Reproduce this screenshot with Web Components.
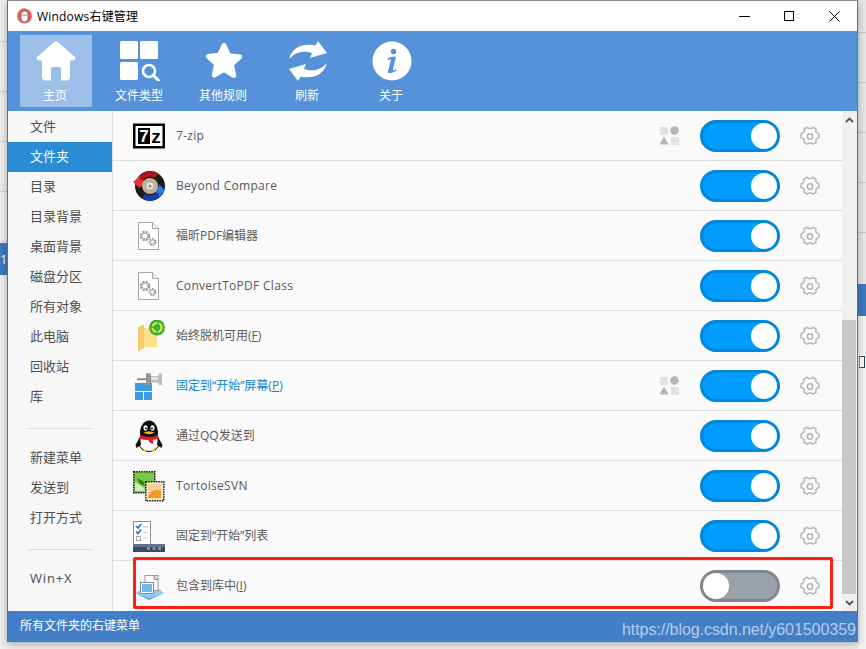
<!DOCTYPE html>
<html>
<head>
<meta charset="utf-8">
<title>Windows右键管理</title>
<style>
  html, body { margin: 0; padding: 0; }
  body { width: 866px; height: 649px; overflow: hidden; }
</style>
</head>
<body>
<desk-top>
  <app-window></app-window>
</desk-top>

<script>
const FONT = `"Open Sans", "Noto Sans CJK SC", sans-serif`;

const ARROW = `M1 18C3 10 10 4 18 4c3-.5 7-.5 9.500.5L30 0l9 12-17 5 2-5C16 9 7 11 1 18z`;

// icons for the toolbar, all white on blue
const TOOL_ICONS = {
  home: `<svg width="40" height="40" viewBox="0 0 40 40"><path fill="#fff" d="M20 .6c1 0 1.800.4 2.600 1.100L38.600 15.700c1.800 1.700.7 3.900-1.300 3.900H34V36c0 2-1.300 3.400-3.300 3.400H25V27.800c0-1.200-.7-1.900-1.800-1.900h-6.400c-1.100 0-1.800.7-1.800 1.900V39.400H9.300C7.300 39.400 6 38 6 36V19.600H2.700c-2 0-3.100-2.200-1.300-3.900L17.400 1.700C18.200 1 19 .6 20 .6z"/></svg>`,
  types: `<svg width="40" height="40" viewBox="0 0 40 40"><g fill="#fff"><rect x="0" y="0" width="18" height="18" rx="1.500"/><rect x="20" y="0" width="18" height="18" rx="1.500"/><rect x="0" y="21" width="18" height="18" rx="1.500"/></g><circle cx="29" cy="30" r="6" fill="none" stroke="#fff" stroke-width="2.600"/><path d="M33.500 34.500L39 40" stroke="#fff" stroke-width="3" stroke-linecap="round"/></svg>`,
  star: `<svg width="40" height="40" viewBox="0 0 40 40"><path fill="#fff" stroke="#fff" stroke-width="5" stroke-linejoin="round" d="M20 4.500l4.600 10.300 11 1.200-8.200 7.500 2.300 11L20 28.400 10.300 34l2.300-11-8.200-7.500 11-1.200z"/></svg>`,
  refresh: `<svg width="40" height="40" viewBox="0 0 40 40"><g fill="#fff"><path d="${ARROW}"/><path d="${ARROW}" transform="rotate(180 20 20)"/></g></svg>`,
  info: `<svg width="40" height="40" viewBox="0 0 40 40"><circle cx="20" cy="20" r="19.500" fill="#fff"/><g fill="#5592d9"><circle cx="21.500" cy="10.500" r="2.700"/><path d="M15.500 17.500c2-1.300 4.500-2.100 7.200-2.100.9 0 1.200.6 1 1.500l-2.800 11.600c-.2.800.4 1 1 .7l2-.9.500 1.200c-2 1.500-4.400 2.600-7 2.600-1.200 0-1.700-.7-1.400-1.900l2.800-11c.2-.8-.3-1-1-.7l-1.900.8z"/></g></svg>`
};

// icons at the left of the rows, 32x32
const ROW_ICONS = {
  sevenzip: `<svg width="32" height="32" viewBox="0 0 32 32"><rect x="0" y="3.500" width="32" height="25" fill="#000"/><rect x="2.500" y="6" width="27" height="20" fill="#fff"/><rect x="5" y="8" width="12" height="16" fill="#000"/><text x="11" y="22" text-anchor="middle" font-family="Liberation Sans" font-weight="700" font-size="17" fill="#fff">7</text><text x="23" y="23" text-anchor="middle" font-family="Liberation Sans" font-weight="700" font-size="19" fill="#000">z</text></svg>`,
  beyond: `<svg width="32" height="32" viewBox="0 0 32 32"><circle cx="17" cy="16" r="15" fill="#1a1a1a"/><path d="M3 13C5 5 12 1 17 1c3 0 6 1 8 3l-3 4c-4-2-9-2-12 2v3z" fill="#b3121a"/><path d="M0 12l7-6v4l4 .5v5.500l-4 .5v2z" fill="#e8343a"/><path d="M31 19c-2 8-9 12-14 12-3 0-6-1-8-3l3-4c4 2 9 2 12-2v-3z" fill="#1240a8"/><path d="M32 20l-6 7v-4l-4-.5V17h4v-3z" fill="#2f78e8"/><circle cx="17" cy="16" r="8" fill="#bdb29c"/><circle cx="17" cy="16" r="3.500" fill="#e8e4da"/><circle cx="17" cy="16" r="1.500" fill="#8f8a80"/></svg>`,
  doc: `<svg width="32" height="32" viewBox="0 0 32 32"><path d="M5.500 2.500h14l6 6v21h-20z" fill="#fff" stroke="#a5a5a5"/><path d="M19.500 2.500v6h6" fill="#eee" stroke="#a5a5a5"/><g fill="none" stroke="#9a9a9a"><circle cx="12" cy="16" r="3.800" stroke-width="3" stroke-dasharray="2 1"/><circle cx="19.500" cy="22" r="2.700" stroke-width="2.600" stroke-dasharray="1.600 .8"/></g></svg>`,
  offline: `<svg width="32" height="32" viewBox="0 0 32 32"><path d="M10 8h14v19H10z" fill="#fcdf8c"/><path d="M5 7l6-2.500V28l-6 3.500z" fill="#f2cd6a"/><circle cx="24" cy="7.500" r="8" fill="#41ad3a"/><circle cx="24" cy="7.500" r="4.500" fill="none" stroke="#d9e83f" stroke-width="2" stroke-dasharray="6 1.500"/></svg>`,
  pin: `<svg width="32" height="32" viewBox="0 0 32 32"><g fill="#3a9be9"><rect x="2" y="13" width="17" height="8"/><rect x="2" y="22" width="8" height="8"/><rect x="11" y="22" width="8" height="8"/></g><rect x="4" y="8.500" width="10" height="1.500" fill="#777"/><path d="M13 3.500h5v2.500h7l1-2.500h3V15h-3l-1-2.500h-7V15h-5z" fill="#bcbcbc"/><rect x="13" y="3.500" width="5" height="11.500" fill="#969696"/><rect x="18" y="7" width="7" height="3" fill="#e2e2e2"/></svg>`,
  qq: `<svg width="32" height="32" viewBox="0 0 32 32"><ellipse cx="16" cy="23" rx="10" ry="8.500" fill="#fff" stroke="#111"/><path d="M7 13C7 6 11 .5 16 .5S25 6 25 13c0 2-.5 3-1 4H8c-.5-1-1-2-1-4z" fill="#111"/><path d="M7 17l-4.500 8 1 3 4.500-3zM25 17l4.500 8-1 3-4.500-3z" fill="#111"/><ellipse cx="12.500" cy="8" rx="2" ry="2.800" fill="#fff"/><ellipse cx="19.500" cy="8" rx="2" ry="2.800" fill="#fff"/><circle cx="13" cy="8.500" r="1" fill="#111"/><circle cx="19" cy="8.500" r="1" fill="#111"/><path d="M10.500 12.500q5.500-2 11 0-5.500 3.500-11 0z" fill="#f7b21d"/><path d="M7 15q9 4 18 0l.8 3.500-6 1.500.5 4-4-1.800-1-2.200Q10 20 6.500 18.500z" fill="#e01b22"/><path d="M8 31q3-3 6 0zM18 31q3-3 6 0z" fill="#f7b21d"/></svg>`,
  svn: `<svg width="32" height="32" viewBox="0 0 32 32"><rect x=".8" y="1.800" width="21" height="21" fill="#7cc84a" stroke="#111" stroke-width="1.500" stroke-dasharray="1.500 1"/><path d="M2 12l8 5 3 4H2z" fill="#d3edbd"/><path d="M4 8l6 3 2 5-5-2z" fill="#2f7d22"/><rect x="12.800" y="11.800" width="18" height="19" fill="#fdf2de" stroke="#111" stroke-width="1.500" stroke-dasharray="1.500 1"/><rect x="14.500" y="13.500" width="14" height="15" fill="#f9cf97"/><path d="M15 27q5-10 13-6v7H15z" fill="#ef9a22"/></svg>`,
  list: `<svg width="32" height="32" viewBox="0 0 32 32"><rect x=".5" y="1.500" width="17" height="24" fill="#fff" stroke="#8a8a8a"/><path d="M3 6l2 2 3-4M3 11.500l2 2 3-4" fill="none" stroke="#1f6fc9" stroke-width="1.600"/><path d="M10 7h5M10 12.500h5M10 18h5" stroke="#c4c4c4"/><rect x="3.500" y="16.500" width="4" height="4" fill="none" stroke="#aaa"/><rect x="0" y="24" width="32" height="9" fill="#3b4a63"/><rect x="0" y="24" width="32" height="3" fill="#65748d"/><g fill="#8793a8"><rect x="14" y="27" width="3" height="3"/><rect x="19.500" y="27" width="3" height="3"/><rect x="25" y="27" width="3" height="3"/></g></svg>`,
  library: `<svg width="32" height="32" viewBox="0 0 32 32"><path d="M2 23l7-4h17l5 4-15 5z" fill="#8ecdf4"/><path d="M2 23l14 5 15-5-15 7z" fill="#45a5e6"/><rect x="12" y="5.500" width="13" height="15" fill="#fff" stroke="#999"/><path d="M21 5.500l4 4h-4z" fill="#ddd" stroke="#999"/><rect x="7.500" y="12.500" width="13" height="11" fill="#fff" stroke="#888"/><rect x="9" y="14" width="10" height="8" fill="#6cb9ef"/></svg>`
};

const GEAR = `<svg width="20" height="21" viewBox="1.500 .5 17 18"><path fill="none" stroke="#b3b3b3" stroke-width="1.200" stroke-linejoin="round" d="M7.600 1.500c.8.900 1.500 1.300 2.400 1.300s1.600-.4 2.400-1.300l2.800 1.600c-.4 1.200-.3 2 .1 2.700.5.800 1.200 1.200 2.400 1.400v3.200c-1.200.2-1.900.6-2.400 1.400-.4.700-.5 1.500-.1 2.700l-2.800 1.600c-.8-.9-1.500-1.300-2.400-1.300s-1.600.4-2.400 1.300l-2.800-1.600c.4-1.200.3-2-.1-2.700-.5-.8-1.200-1.200-2.400-1.400V7.200c1.200-.2 1.900-.6 2.400-1.400.4-.7.500-1.500.1-2.700z"/><circle cx="10" cy="9.500" r="2.300" fill="none" stroke="#b3b3b3" stroke-width="1.200"/></svg>`;

const SHAPES = `<svg width="19" height="19" viewBox="0 0 19 19"><g fill="#e2e2e2"><rect x="0" y="1" width="8" height="8" rx="1"/><rect x="11" y="11" width="8" height="8" rx="1"/></g><g fill="#b5b5b5"><circle cx="14.500" cy="4.500" r="4.300"/><path d="M4 10.500l4.500 8h-9z"/></g></svg>`;

class DeskTop extends HTMLElement {
  constructor() {
    super();
    this.attachShadow({ mode: 'open' });
    this.shadowRoot.innerHTML = `
      <style>
        :host {
          display: block;
          position: relative;
          width: 866px;
          height: 649px;
          overflow: hidden;
          background: repeating-linear-gradient(#eeeeee 0, #eeeeee 49px, #d4d4d4 49px, #d4d4d4 50px) 0 -8px;
          font-family: ${FONT};
        }
        .patch { position: absolute; background: #3f79bd; width: 10px; height: 32px; }
        .left { left: 0; top: 243px; color: #fff; font-size: 13px; line-height: 32px; }
        .right { right: 0; top: 284px; }
        .strip {
          position: absolute;
          left: 858px;
          right: 0;
          top: 0;
          height: 284px;
          background: repeating-linear-gradient(#e6e6e6 0, #e6e6e6 49px, #c8c8c8 49px, #c8c8c8 50px) 0 -17px;
        }
        .floor { position: absolute; right: 0; left: 858px; top: 315px; bottom: 0; background: #f3f3f3; }
        .left-floor { position: absolute; left: 0; width: 8px; top: 275px; bottom: 0; background: #efefef; }
        .tick {
          position: absolute;
          left: 859px;
          top: 356px;
          width: 4px;
          height: 10px;
          border: 1px solid #2c4a6e;
          border-left-color: #d9893a;
          background: #fff;
        }
        .mark {
          position: absolute;
          left: 622px;
          top: 621px;
          font: 16px "Liberation Sans", sans-serif;
          letter-spacing: -0.06px;
          color: rgba(255, 255, 255, 0.62);
          white-space: nowrap;
        }
      </style>
      <div class="left-floor"></div>
      <div class="strip"></div>
      <div class="floor"></div>
      <div class="tick"></div>
      <div class="patch left">1</div>
      <div class="patch right"></div>
      <slot></slot>
      <div class="mark">https://blog.csdn.net/y601500359</div>
    `;
  }
}

class AppWindow extends HTMLElement {
  constructor() {
    super();
    this.attachShadow({ mode: 'open' });
    this.shadowRoot.innerHTML = `
      <style>
        :host {
          display: flex;
          flex-direction: column;
          position: absolute;
          left: 7px;
          top: 0;
          width: 849px;
          height: 640px;
          background: #fafafa;
          border: 1px solid #6e6e6e;
          border-top-color: #8a8a8a;
          box-shadow: 0 2px 8px rgba(0, 0, 0, 0.3);
        }
        .body { display: flex; flex: 1; min-height: 0; }
        .list {
          flex: 1;
          min-width: 0;
          overflow: hidden;
        }
        .alert {
          position: absolute;
          left: 125px;
          top: 556px;
          width: 694px;
          height: 46px;
          border: 3px solid #ff1f17;
          border-radius: 2px;
        }
      </style>
      <title-bar></title-bar>
      <tool-bar></tool-bar>
      <div class="body">
        <side-nav></side-nav>
        <div class="list">
          <ext-row icon="sevenzip" name="7-zip" latin shapes></ext-row>
          <ext-row icon="beyond" name="Beyond Compare" latin></ext-row>
          <ext-row icon="doc" name="福昕PDF编辑器"></ext-row>
          <ext-row icon="doc" name="ConvertToPDF Class" latin></ext-row>
          <ext-row icon="offline" name="始终脱机可用(<u>F</u>)"></ext-row>
          <ext-row icon="pin" name="固定到“开始”屏幕(<u>P</u>)" shapes link></ext-row>
          <ext-row icon="qq" name="通过QQ发送到"></ext-row>
          <ext-row icon="svn" name="TortoiseSVN" latin></ext-row>
          <ext-row icon="list" name="固定到“开始”列表"></ext-row>
          <ext-row icon="library" name="包含到库中(<u>I</u>)" off></ext-row>
        </div>
        <scroll-bar></scroll-bar>
      </div>
      <status-bar>所有文件夹的右键菜单</status-bar>
      <div class="alert"></div>
    `;
  }
}

class TitleBar extends HTMLElement {
  constructor() {
    super();
    this.attachShadow({ mode: 'open' });
    this.shadowRoot.innerHTML = `
      <style>
        :host {
          display: flex;
          align-items: center;
          height: 30px;
          flex: none;
          background: #fff;
          color: #000;
          font-size: 12px;
          padding-left: 9px;
        }
        .ttl { margin-left: 5px; padding-bottom: 1px; letter-spacing: .2px; }
        .ctrls { margin-left: auto; display: flex; }
        .ctrl { width: 45px; height: 30px; display: flex; align-items: center; justify-content: center; }
      </style>
      <svg width="15" height="16" viewBox="0 0 15 16">
        <circle cx="7.500" cy="8" r="7.500" fill="#e8604c"/>
        <rect x="4" y="3" width="7" height="11" rx="3.500" fill="#fff" stroke="#555" stroke-width=".7"/>
        <path d="M4.500 7h6" stroke="#777" stroke-width=".8"/>
        <path d="M5 1h3v2" fill="none" stroke="#777" stroke-width=".8"/>
      </svg>
      <span class="ttl">Windows右键管理</span>
      <div class="ctrls">
        <div class="ctrl"><svg width="11" height="11"><path d="M0 5.500h11" stroke="#000"/></svg></div>
        <div class="ctrl"><svg width="11" height="11"><rect x=".5" y=".5" width="9" height="9" fill="none" stroke="#000"/></svg></div>
        <div class="ctrl"><svg width="11" height="11"><path d="M.5.500l10 10M10.500.500l-10 10" stroke="#000"/></svg></div>
      </div>
    `;
  }
}

class ToolBar extends HTMLElement {
  constructor() {
    super();
    this.attachShadow({ mode: 'open' });
    const items = [
      ['home', '主页', true],
      ['types', '文件类型'],
      ['star', '其他规则'],
      ['refresh', '刷新'],
      ['info', '关于']
    ];
    this.shadowRoot.innerHTML = `
      <style>
        :host {
          display: flex;
          flex: none;
          gap: 12px;
          height: 80px;
          box-sizing: border-box;
          padding: 4px 12px;
          background: #5592d9;
        }
        .tool {
          width: 72px;
          height: 72px;
          display: flex;
          flex-direction: column;
          align-items: center;
          color: #fff;
          font-size: 12px;
          line-height: 16px;
        }
        .tool svg { margin-top: 6px; margin-bottom: 7px; display: block; }
        .tool span { margin-right: 2px; }
        .tool.on { background: #9cbfea; }
      </style>
      ${items.map(it => `
        <div class="tool ${it[2] ? 'on' : ''}">${TOOL_ICONS[it[0]]}<span>${it[1]}</span></div>
      `).join('')}
    `;
  }
}

class SideNav extends HTMLElement {
  constructor() {
    super();
    this.attachShadow({ mode: 'open' });
    const top = ['文件', '文件夹', '目录', '目录背景', '桌面背景', '磁盘分区', '所有对象', '此电脑', '回收站', '库'];
    const mid = ['新建菜单', '发送到', '打开方式'];
    this.shadowRoot.innerHTML = `
      <style>
        :host {
          display: block;
          flex: none;
          width: 104px;
          box-sizing: content-box;
          background: #f7f7f7;
          border-right: 1px solid #dcdcdc;
          padding-top: 1px;
          font-size: 13px;
          color: #4f4f4f;
        }
        .item { height: 30px; line-height: 29px; padding-left: 22px; }
        .item.on { background: #2a8cd4; color: #fff; }
        .wide { letter-spacing: .8px; }
        hr { border: 0; height: 1px; background: #dcdcdc; margin: 16px 19px 14px 20px; }
      </style>
      ${top.map((t, i) => `<div class="item ${i === 1 ? 'on' : ''}">${t}</div>`).join('')}
      <hr>
      ${mid.map(t => `<div class="item">${t}</div>`).join('')}
      <hr>
      <div class="item wide">Win+X</div>
    `;
  }
}

class ExtRow extends HTMLElement {
  constructor() {
    super();
    this.attachShadow({ mode: 'open' });
    const off = this.hasAttribute('off');
    this.shadowRoot.innerHTML = `
      <style>
        :host {
          display: flex;
          align-items: center;
          box-sizing: border-box;
          height: 50px;
          padding-left: 20px;
          border-bottom: 1px solid #dcdcdc;
          font-size: 12px;
          color: #595959;
        }
        :host([link]) { color: #0a84d6; }
        :host([latin]) .name { letter-spacing: .3px; padding-bottom: 0; }
        :host(:last-child) { border-bottom: 0; }
        .pic { width: 32px; height: 32px; flex: none; margin-right: 11px; }
        .pic svg { display: block; }
        .name { flex: 1; white-space: nowrap; padding-bottom: 2px; }
        .shape { width: 19px; height: 19px; margin-right: 21px; margin-top: -1px; }
        .shape svg, .gear svg { display: block; }
        .gear { width: 20px; height: 21px; margin: 1px 22px 0 20px; }
      </style>
      <div class="pic">${ROW_ICONS[this.getAttribute('icon')]}</div>
      <div class="name">${this.getAttribute('name')}</div>
      ${this.hasAttribute('shapes') ? `<div class="shape">${SHAPES}</div>` : ''}
      <toggle-switch ${off ? 'off' : ''}></toggle-switch>
      <div class="gear">${GEAR}</div>
    `;
  }
}

class ToggleSwitch extends HTMLElement {
  constructor() {
    super();
    this.attachShadow({ mode: 'open' });
    this.shadowRoot.innerHTML = `
      <style>
        :host {
          display: flex;
          justify-content: flex-end;
          align-items: center;
          flex: none;
          box-sizing: border-box;
          width: 80px;
          height: 32px;
          border-radius: 16px;
          background: #009cff;
          border: 3px solid #0087dc;
        }
        :host([off]) {
          justify-content: flex-start;
          background: #9aa1ab;
          border-color: #7f8690;
        }
        .knob { width: 26px; height: 26px; border-radius: 50%; background: #fff; }
      </style>
      <div class="knob"></div>
    `;
  }
}

class ScrollBar extends HTMLElement {
  constructor() {
    super();
    this.attachShadow({ mode: 'open' });
    this.shadowRoot.innerHTML = `
      <style>
        :host {
          display: flex;
          flex-direction: column;
          flex: none;
          width: 15px;
          background: #f0f0f0;
        }
        .btn { height: 17px; flex: none; display: flex; align-items: center; justify-content: center; }
        .gap { height: 192px; flex: none; }
        .thumb { flex: 1; background: #c8c8c8; margin-right: 1px; }
      </style>
      <div class="btn"><svg width="9" height="6"><path d="M1 5l3.500-3.500L8 5" fill="none" stroke="#555" stroke-width="1.800"/></svg></div>
      <div class="gap"></div>
      <div class="thumb"></div>
      <div class="btn"><svg width="9" height="6"><path d="M1 1l3.500 3.500L8 1" fill="none" stroke="#555" stroke-width="1.800"/></svg></div>
    `;
  }
}

class StatusBar extends HTMLElement {
  constructor() {
    super();
    this.attachShadow({ mode: 'open' });
    this.shadowRoot.innerHTML = `
      <style>
        :host {
          display: flex;
          align-items: center;
          flex: none;
          box-sizing: border-box;
          height: 30px;
          padding: 0 0 3px 12px;
          background: #437fc7;
          color: #fff;
          font-size: 12px;
        }
      </style>
      <slot></slot>
    `;
  }
}

customElements.define('desk-top', DeskTop);
customElements.define('app-window', AppWindow);
customElements.define('title-bar', TitleBar);
customElements.define('tool-bar', ToolBar);
customElements.define('side-nav', SideNav);
customElements.define('ext-row', ExtRow);
customElements.define('toggle-switch', ToggleSwitch);
customElements.define('scroll-bar', ScrollBar);
customElements.define('status-bar', StatusBar);
</script>
</body>
</html>
